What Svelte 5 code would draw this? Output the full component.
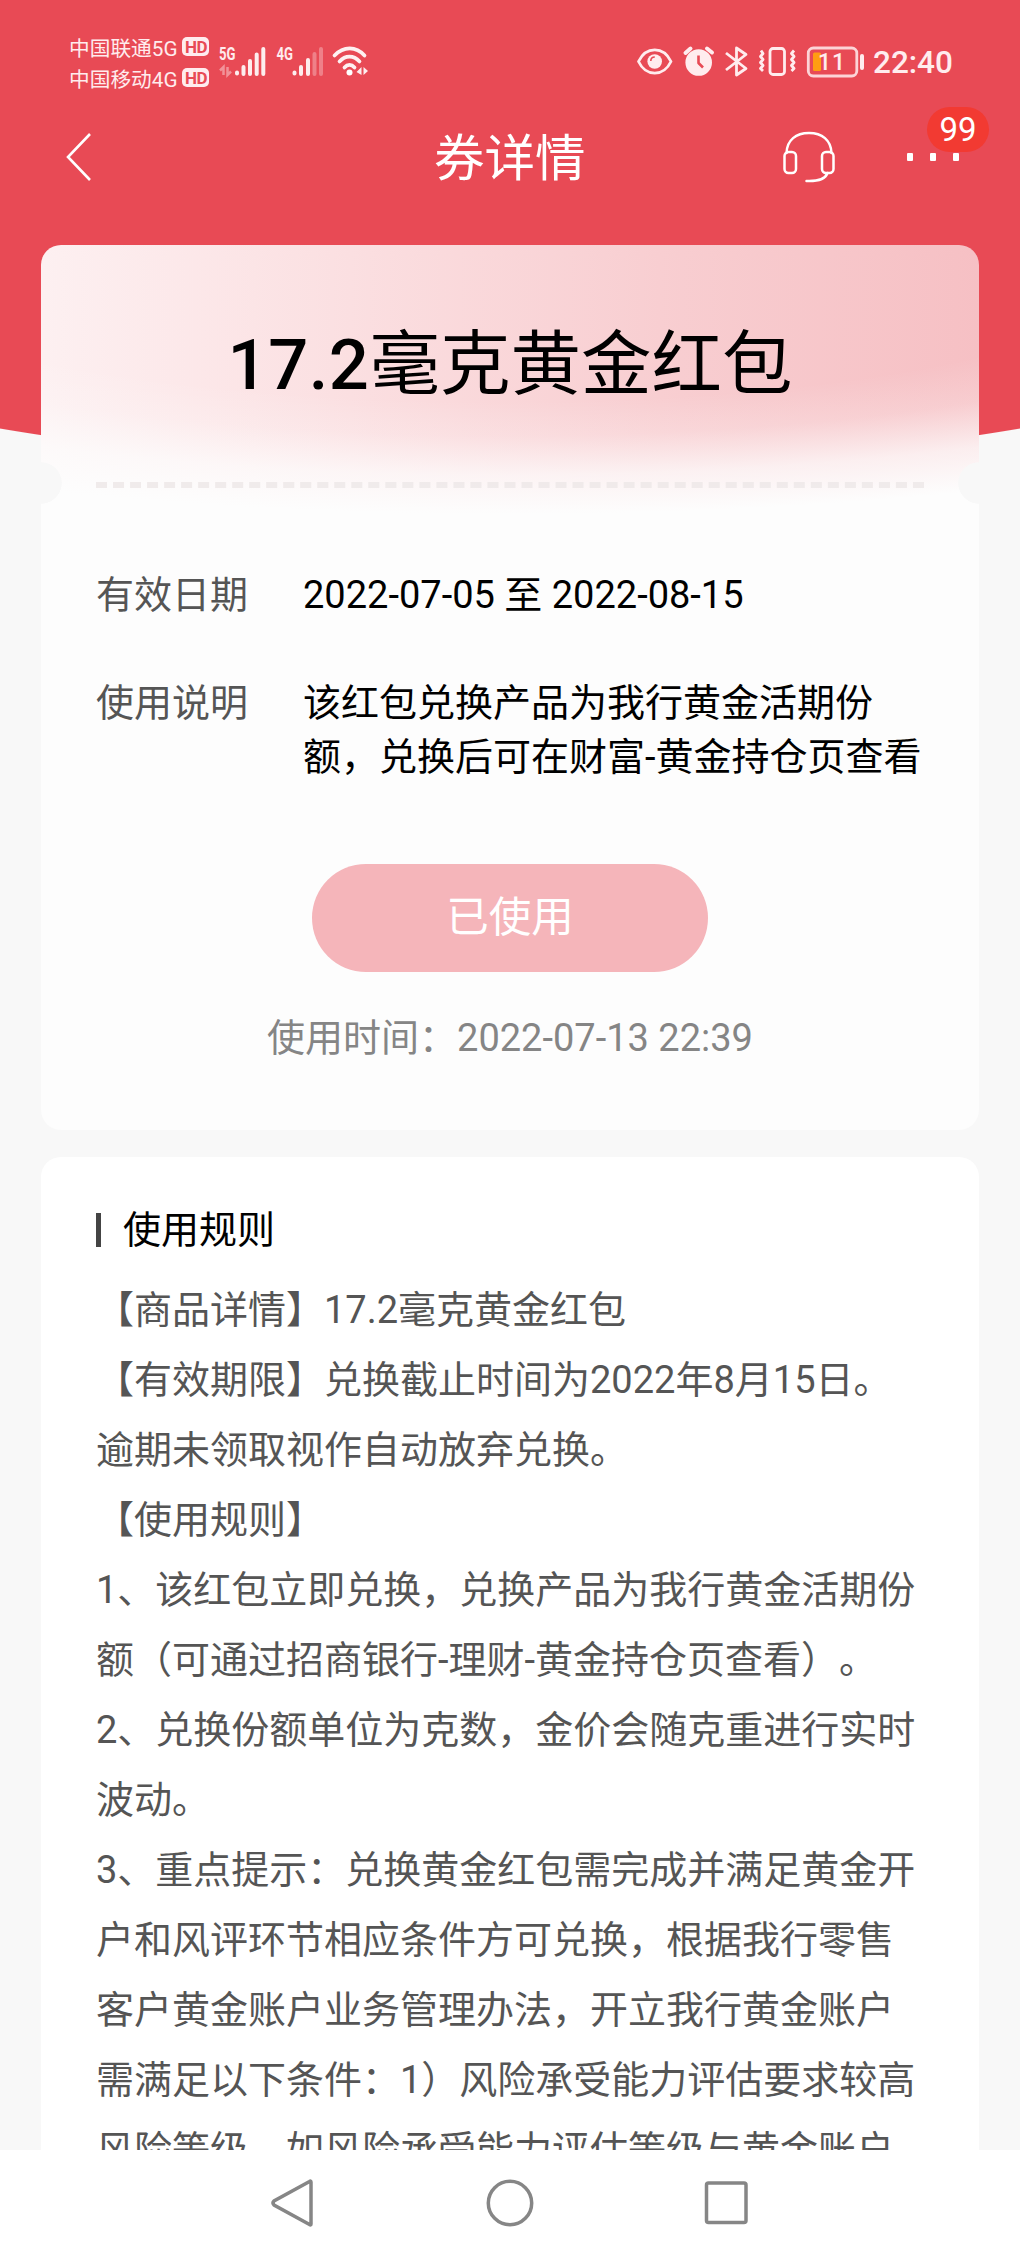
<script lang="ts">
  const carriers = ['中国联通5G', '中国移动4G'];
  const used = true;

  const rules = [
    '【商品详情】17.2毫克黄金红包',
    '【有效期限】兑换截止时间为2022年8月15日。\n逾期未领取视作自动放弃兑换。',
    '【使用规则】',
    '1、该红包立即兑换，兑换产品为我行黄金活期份额（可通过招商银行-理财-黄金持仓页查看）。',
    '2、兑换份额单位为克数，金价会随克重进行实时波动。',
    '3、重点提示：兑换黄金红包需完成并满足黄金开户和风评环节相应条件方可兑换，根据我行零售客户黄金账户业务管理办法，开立我行黄金账户需满足以下条件：1）风险承受能力评估要求较高风险等级，如风险承受能力评估等级与黄金账户'
  ];
</script>

<div class="phone">
  <div class="content">
    <header>
      <div class="status">
        <div class="carriers">
          {#each carriers as name (name)}
            <div class="carrier">{name}<b>HD</b></div>
          {/each}
        </div>
        <svg class="signals" width="160" height="40" viewBox="215 40 160 40" fill="none">
          <g fill="#ffecee" font-family="Roboto, sans-serif" font-size="18" font-weight="700">
            <text x="219" y="60.300" textLength="16.500" lengthAdjust="spacingAndGlyphs">5G</text>
            <text x="276.500" y="60.300" textLength="16.500" lengthAdjust="spacingAndGlyphs">4G</text>
          </g>
          <g stroke="#fff" stroke-opacity=".9" stroke-width="4" stroke-linecap="round">
            <path d="M237 72.500v1M243.500 67v7M250 61v13M256.700 54.500v19.500M263.300 49v25" />
            <path d="M294.500 72.500v1M301 67v7M308 60v14" />
            <path d="M314.500 54v20M321 49v25" stroke-opacity=".3" />
          </g>
          <path d="M223.500 75v-8l-3.500 3.500M227.500 67v8l3.500-3.500" stroke="#fff" stroke-opacity=".4" stroke-width="2.500" />
          <g stroke="#fff" stroke-opacity=".92" stroke-width="3.700" stroke-linecap="round">
            <path d="M334.500 55.500c9-9.500 21.500-9.500 30 0M339.500 61.500c6-6.500 14-6.500 20 0M344.500 67.500c3-3.500 7-3.500 10 0" />
          </g>
          <circle cx="349.500" cy="72.500" r="3" fill="#fff" />
          <path d="M361.500 67v8l-5-3zM363.500 75v-8l4.500 4z" fill="#fff" fill-opacity=".9" />
        </svg>
        <svg class="indicators" width="230" height="40" viewBox="635 42 230 40" fill="none" stroke="#ffecee" stroke-width="2.800" stroke-linejoin="round">
          <path d="M638.500 61.500c7.500-15.500 25-15.500 32.500 0-7.500 15.500-25 15.500-32.500 0z" />
          <circle cx="654.700" cy="61.500" r="7.300" fill="#ffecee" stroke="none" />
          <path d="M650.800 61c0-2.500 1.500-4 4-4" stroke="#e84a55" stroke-width="1.600" />
          <circle cx="698.700" cy="62.500" r="13.300" fill="#ffecee" stroke="none" />
          <path d="M698.500 55.500v7.500l4.500 4.500" stroke="#e84a55" stroke-width="2.600" />
          <path d="M685.500 53l5-4.500M707 48.500l5 4" stroke-width="4" stroke-linecap="round" />
          <path d="M726 53l20 15.500-9.500 6.500V48l9.500 6.500L726 70" />
          <rect x="770" y="48.500" width="14.500" height="26" rx="3" />
          <path d="M761 50.500l2 3-2.500 3 2.500 3-2.500 3 2.500 3-2.500 3 2.500 2.500M794 50.500l-2.500 3 2.500 3-2.500 3 2.500 3-2.500 3 2.500 3-2.500 2.500" />
          <rect x="808.300" y="48" width="48.500" height="28" rx="5" stroke-opacity=".85" />
          <rect x="813" y="52.500" width="8" height="18.500" rx="1.500" fill="#ff9d12" stroke="none" />
          <path d="M862 56v12" stroke-width="4" stroke-linecap="round" />
          <text x="818" y="69.500" font-family="Roboto, sans-serif" font-size="23" font-weight="500" letter-spacing="1" fill="#ffecee" stroke="none">11</text>
        </svg>
        <time>22:40</time>
      </div>

      <nav class="titlebar">
        <svg class="back" width="28" height="50" viewBox="0 0 28 50" fill="none" stroke="#fff" stroke-width="2.600">
          <path d="M25 2L3 25l22 23" />
        </svg>
        <h1>券详情</h1>
        <svg class="headset" width="54" height="54" viewBox="0 0 54 54" fill="none" stroke="#fff" stroke-width="2.500" stroke-linecap="round">
          <path d="M4.500 23C5 10 14 3 27 3s22 7 22.500 20" />
          <rect x="2.500" y="22" width="11.500" height="21" rx="4" />
          <rect x="40" y="22" width="11.500" height="21" rx="4" />
          <path d="M45.500 43c-2 5.500-9 8.500-21 8" />
        </svg>
        <div class="more">
          <i></i><i></i><i></i>
          <span class="badge">99</span>
        </div>
      </nav>
    </header>

    <section class="coupon">
      <h2><b>17.2</b>毫克黄金红包</h2>
      <svg class="perforation" width="828" height="6">
        <path d="M0 3h828" stroke="#eee9e9" stroke-opacity=".9" stroke-width="6" stroke-dasharray="11 6.020" />
      </svg>
      <dl>
        <dt>有效日期</dt>
        <dd>2022-07-05 至 2022-08-15</dd>
        <dt>使用说明</dt>
        <dd>该红包兑换产品为我行黄金活期份额，兑换后可在财富-黄金持仓页查看</dd>
      </dl>
      <button disabled={used}>已使用</button>
      <p class="usedat">使用时间：2022-07-13 22:39</p>
    </section>

    <section class="rules">
      <h3>使用规则</h3>
      {#each rules as rule}
        <p>{rule}</p>
      {/each}
    </section>
  </div>

  <footer>
    <svg width="50" height="50" viewBox="0 0 50 50"><path d="M42 4v42q0 1.500-1.500.5L5 27q-2-2 0-4L40.500 3.500Q42 2.500 42 4z" /></svg>
    <svg width="50" height="50" viewBox="0 0 50 50"><circle cx="25" cy="25" r="21.700" /></svg>
    <svg width="50" height="50" viewBox="0 0 50 50"><rect x="5.500" y="5" width="39.500" height="39.500" rx="2" /></svg>
  </footer>
</div>

<style>
  :global(body) {
    margin: 0;
  }
  .phone {
    width: 1020px;
    height: 2255px;
    display: flex;
    flex-direction: column;
    overflow: hidden;
    background: #f8f8f8;
    font-family: Roboto, 'Noto Sans CJK SC', sans-serif;
    text-spacing-trim: space-all;
  }
  .content {
    height: 2150px;
    flex: none;
    overflow: hidden;
    background: radial-gradient(ellipse 1249px 470px at 50% 0, #e84a55 99.800%, transparent 100%) no-repeat;
  }
  header {
    height: 245px;
    color: #fff;
  }
  .status {
    height: 110px;
    display: flex;
    padding-left: 69px;
    color: #ffecee;
  }
  .carriers {
    width: 146px;
    padding-top: 31px;
  }
  .carrier {
    display: flex;
    align-items: center;
    gap: 5px;
    height: 31px;
    font-size: 20.700px;
    white-space: nowrap;
  }
  .carrier b {
    width: 27px;
    height: 19px;
    border-radius: 5px;
    background: #ffecee;
    color: #e84a55;
    font-size: 17px;
    line-height: 20px;
    text-align: center;
    letter-spacing: -0.500px;
  }
  .signals {
    margin-top: 40px;
  }
  .indicators {
    margin: 42px 0 0 260px;
  }
  time {
    margin: 43px 0 0 8px;
    font-size: 31.500px;
    line-height: 40px;
    font-weight: 500;
  }
  .titlebar {
    position: relative;
    display: flex;
    align-items: center;
    height: 94px;
    padding-left: 65px;
  }
  h1 {
    margin: 4px 0 0 341px;
    width: 151px;
    font-size: 50.500px;
    font-weight: 400;
    line-height: 90px;
    white-space: nowrap;
  }
  .headset {
    margin-left: 197px;
  }
  .more {
    position: relative;
    display: flex;
    gap: 17px;
    margin-left: 71px;
  }
  .more i {
    width: 6px;
    height: 8px;
    border-radius: 1px;
    background: #fff;
  }
  .badge {
    position: absolute;
    left: 20px;
    top: -46px;
    width: 62px;
    height: 45px;
    border-radius: 23px;
    background: #f23a32;
    font-size: 33px;
    line-height: 45px;
    text-align: center;
  }
  .coupon {
    box-sizing: border-box;
    height: 885px;
    margin: 0 41px 27px;
    padding: 0 55px;
    border-radius: 20px;
    background:
      radial-gradient(circle 21px at 0 238px, #f8f8f8 97%, transparent 100%),
      radial-gradient(circle 21px at 100% 238px, #f8f8f8 97%, transparent 100%),
      radial-gradient(
        ellipse 925px 217px at 50% 0,
        rgba(253, 253, 253, 0) 72%,
        rgba(253, 253, 253, 0.200) 88%,
        rgba(253, 253, 253, 0.750) 106%,
        #fdfdfd 124%
      ),
      linear-gradient(90deg, #fdf0f1, #fbdfe1 33%, #f8ced1 66%, #f6c0c4);
  }
  h2 {
    margin: 0;
    padding-top: 70px;
    height: 167px;
    font-size: 70.500px;
    line-height: 100px;
    font-weight: 400;
    text-align: center;
    color: #000;
  }
  h2 b {
    font-weight: 500;
    letter-spacing: 0.500px;
  }
  .perforation {
    display: block;
    margin-bottom: 80px;
  }
  dl {
    display: grid;
    grid-template-columns: 207px 1fr;
    row-gap: 54px;
    margin: 0;
    font-size: 38px;
    line-height: 54px;
  }
  dt {
    color: #555;
  }
  dd {
    margin: 0 -6px 0 0;
    color: #000;
  }
  button {
    display: block;
    width: 396px;
    height: 108px;
    margin: 80px auto 39px;
    padding: 0 0 9px;
    border: none;
    border-radius: 54px;
    background: #f5b5ba;
    color: #fff;
    font: inherit;
    font-size: 42.500px;
  }
  .usedat {
    margin: 0;
    font-size: 38px;
    line-height: 54px;
    text-align: center;
    color: #858585;
  }
  .rules {
    height: 1100px;
    margin: 0 41px;
    padding: 46px 55px 0;
    border-radius: 20px;
    background: #fff;
  }
  h3 {
    display: flex;
    align-items: center;
    gap: 22px;
    margin: 0 0 18px;
    font-size: 38px;
    line-height: 54px;
    font-weight: 400;
    color: #000;
  }
  h3::before {
    content: '';
    width: 5px;
    height: 34px;
    background: #444;
  }
  .rules p {
    margin: 0;
    font-size: 38px;
    line-height: 70px;
    color: #555;
    white-space: pre-line;
  }
  footer {
    flex: 1;
    display: flex;
    justify-content: center;
    gap: 166px;
    padding-top: 28px;
    background: #fff;
  }
  footer svg {
    fill: none;
    stroke: #868686;
    stroke-width: 3.500;
  }
</style>
